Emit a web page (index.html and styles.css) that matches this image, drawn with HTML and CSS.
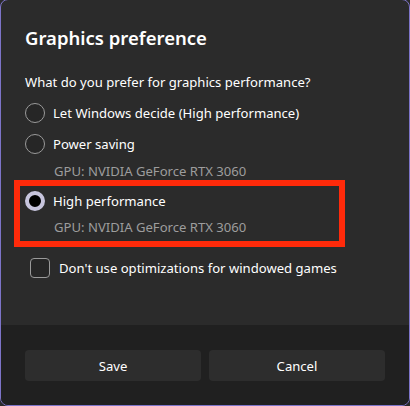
FILE: index.html
```html
<!DOCTYPE html>
<html lang="en">
<head>
    <meta charset="UTF-8">
    <title>Graphics preference</title>
    <link rel="stylesheet" href="styles.css">
</head>
<body>
    <div class="dialog">
        <div class="body">
            <h1 class="title">Graphics preference</h1>
            <p class="question">What do you prefer for graphics performance?</p>

            <div class="option first">
                <span class="radio"></span>
                <span class="label">Let Windows decide (High performance)</span>
            </div>
            <div class="option">
                <span class="radio"></span>
                <span class="label">Power saving</span>
            </div>
            <div class="gpu">GPU: NVIDIA GeForce RTX 3060</div>

            <div class="highlight">
                <div class="option">
                    <span class="radio checked"></span>
                    <span class="label">High performance</span>
                </div>
                <div class="gpu">GPU: NVIDIA GeForce RTX 3060</div>
            </div>

            <div class="check-row">
                <span class="checkbox"></span>
                <span class="label">Don't use optimizations for windowed games</span>
            </div>
        </div>
        <div class="footer">
            <button class="btn">Save</button>
            <button class="btn">Cancel</button>
        </div>
    </div>
</body>
</html>
```

FILE: styles.css
```css
html, body {
    margin: 0;
    padding: 0;
    background: #2b2b2b;
}
body {
    font-family: "Noto Sans", "Open Sans", sans-serif;
    color: #ffffff;
    font-size: 13.1px;
}
.dialog {
    box-sizing: border-box;
    width: 410px;
    height: 407px;
    margin-top: -1px;
    border: 1px solid #7d74c8;
    border-radius: 8px;
    overflow: hidden;
    display: flex;
    flex-direction: column;
    background: #2b2b2b;
}
.body {
    flex: 1;
    padding: 24px 0 0 24px;
}
.title {
    margin: 0;
    font-size: 18.5px;
    font-weight: 600;
    line-height: 28px;
}
.question {
    margin: 20px 0 0 0;
    line-height: 20px;
}
.option {
    display: flex;
    align-items: center;
    height: 20px;
    margin-top: 11px;
}
.option.first {
    margin-top: 11px;
}
.radio {
    box-sizing: border-box;
    width: 20px;
    height: 20px;
    border: 1px solid #9a9a9a;
    border-radius: 50%;
    background: #262626;
    margin-right: 8px;
}
.radio.checked {
    border: 4px solid #c7c5dd;
    background: #000000;
}
.label {
    line-height: 20px;
}
.gpu {
    color: #9d9d9d;
    padding-left: 29px;
    line-height: 20px;
    margin-top: 7px;
}
.highlight {
    width: 314px;
    margin: -1px 0 0 -11px;
    padding: 0 0 4px 5px;
    border: 6px solid #ff2a0a;
}
.highlight .option {
    margin-top: 5px;
}
.highlight .gpu {
    margin-top: 6px;
}
.check-row {
    display: flex;
    align-items: center;
    height: 20px;
    margin: 11px 0 0 5px;
}
.checkbox {
    box-sizing: border-box;
    width: 20px;
    height: 20px;
    border: 1px solid #9a9a9a;
    border-radius: 4px;
    background: #262626;
    margin-right: 9px;
}
.footer {
    height: 80px;
    background: #202020;
    display: flex;
    gap: 8px;
    padding: 25px 24px 0 24px;
    box-sizing: border-box;
}
.btn {
    flex: 1;
    height: 31px;
    border: none;
    border-radius: 4px;
    background: #2d2d2d;
    color: #ffffff;
    font-family: inherit;
    font-size: 13.1px;
}
```
